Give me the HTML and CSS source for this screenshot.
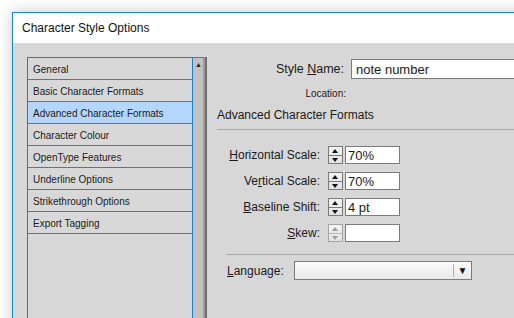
FILE: index.html
```html
<!DOCTYPE html>
<html lang="en">
<head>
    <meta charset="UTF-8">
    <title>Character Style Options</title>
    <link rel="stylesheet" href="styles.css">
</head>
<body>
    <div class="window">
        <div class="titlebar">Character Style Options</div>

        <div class="dialog">
            <div class="sidebar">
                <ul class="category-list">
                    <li>General</li>
                    <li>Basic Character Formats</li>
                    <li class="selected">Advanced Character Formats</li>
                    <li>Character Colour</li>
                    <li>OpenType Features</li>
                    <li>Underline Options</li>
                    <li>Strikethrough Options</li>
                    <li>Export Tagging</li>
                </ul>
                <div class="scrollbar">
                    <span class="scroll-up">&#9650;</span>
                </div>
            </div>

            <div class="panel">
                <div class="name-row">
                    <label class="name-label">Style <u>N</u>ame:</label>
                    <input class="name-input" type="text" value="note number">
                </div>
                <div class="location-row">Location:</div>
                <div class="section-title">Advanced Character Formats</div>

                <div class="fields">
                    <div class="field">
                        <label><u>H</u>orizontal Scale:</label>
                        <span class="spinner"><i class="up"></i><i class="down"></i></span>
                        <input type="text" value="70%">
                    </div>
                    <div class="field">
                        <label>Ve<u>r</u>tical Scale:</label>
                        <span class="spinner"><i class="up"></i><i class="down"></i></span>
                        <input type="text" value="70%">
                    </div>
                    <div class="field">
                        <label><u>B</u>aseline Shift:</label>
                        <span class="spinner"><i class="up"></i><i class="down"></i></span>
                        <input type="text" value="4 pt">
                    </div>
                    <div class="field">
                        <label><u>S</u>kew:</label>
                        <span class="spinner disabled"><i class="up"></i><i class="down"></i></span>
                        <input type="text" value="">
                    </div>
                </div>

                <div class="language-row">
                    <label><u>L</u>anguage:</label>
                    <div class="dropdown">
                        <span class="dropdown-value"></span>
                        <span class="dropdown-arrow">&#9660;</span>
                    </div>
                </div>
            </div>
        </div>
    </div>
</body>
</html>
```

FILE: styles.css
```css
body {
    margin: 0;
    background: #ffffff;
    font-family: "Liberation Sans", Arial, sans-serif;
    color: #1a1a1a;
    overflow: hidden;
    height: 318px;
}

.window {
    margin: 12px 0 0 12px;
    width: 620px;
    height: 400px;
    border: 1px solid #1883d7;
    box-shadow: 0 0 14px rgba(0, 0, 0, 0.22);
    display: flex;
    flex-direction: column;
}

.titlebar {
    height: 30px;
    line-height: 30px;
    padding-left: 9px;
    background: #ffffff;
    font-size: 12px;
    color: #111;
}

.dialog {
    flex: 1;
    display: flex;
    background: #d7d7d7;
    padding: 14px 0 0 14px;
}

/* category list */
.sidebar {
    display: flex;
}

.category-list {
    list-style: none;
    margin: 0;
    padding: 0;
    width: 164px;
    border: 1px solid #1a7fd4;
    border-bottom: none;
    background: #d8d8d8;
}

.category-list li {
    height: 19px;
    line-height: 19px;
    padding: 2px 0 0 5px;
    font-size: 10px;
    color: #1a1a1a;
    border-bottom: 1px solid #707070;
}

.category-list li.selected {
    background: #b5d6fc;
}

.scrollbar {
    width: 9px;
    background: #c2c2c2;
    border-top: 1px solid #707070;
    border-right: 2px solid #9b9b9b;
    box-shadow: 2px 0 0 #6f6f6f;
    padding-left: 1px;
    margin-right: 2px;
}

.scroll-up {
    display: block;
    font-size: 7px;
    line-height: 8px;
    text-align: center;
    margin-top: 3px;
    color: #222;
}

/* right panel */
.panel {
    margin-left: 10px;
    flex: 1;
}

.name-row {
    display: flex;
    align-items: center;
    margin-top: 2px;
}

.name-label {
    width: 127px;
    text-align: right;
    font-size: 12.5px;
}

.name-input {
    margin-left: 7px;
    width: 200px;
    height: 18px;
    border: 1px solid #7a7a7a;
    padding: 0 0 0 4px;
    font-family: "Liberation Sans", Arial, sans-serif;
    font-size: 13px;
    color: #1a1a1a;
}

.location-row {
    margin-top: 8px;
    width: 129px;
    text-align: right;
    font-size: 10px;
    height: 14px;
    line-height: 14px;
}

.section-title {
    margin-top: 6px;
    font-size: 12px;
    height: 16px;
    line-height: 16px;
    padding-bottom: 6px;
    border-bottom: 1px solid #a8a8a8;
}

.fields {
    padding: 16px 0 0 10px;
    display: flex;
    flex-direction: column;
    gap: 8px;
}

.field {
    display: flex;
    align-items: center;
    height: 18px;
}

.field label,
.language-row label {
    font-size: 12px;
}

.field label {
    width: 93px;
    text-align: right;
    margin-right: 8px;
}

.spinner {
    width: 13px;
    height: 16px;
    border: 1px solid #7a7a7a;
    background: linear-gradient(#f2f2f2, #e2e2e2);
    display: flex;
    flex-direction: column;
    margin-right: 2px;
}

.spinner i {
    flex: 1;
    position: relative;
}

.spinner i::after {
    content: "";
    position: absolute;
    left: 3px;
    top: 2px;
    border-left: 3px solid transparent;
    border-right: 3px solid transparent;
}

.spinner .up {
    border-bottom: 1px solid #7a7a7a;
}

.spinner .up::after {
    border-bottom: 4px solid #111;
}

.spinner .down::after {
    top: 2px;
    border-top: 4px solid #111;
}

.spinner.disabled {
    border-color: #a5a5a5;
}

.spinner.disabled .up {
    border-bottom-color: #b5b5b5;
}

.spinner.disabled .up::after {
    border-bottom-color: #9c9c9c;
}

.spinner.disabled .down::after {
    border-top-color: #9c9c9c;
}

.field input {
    width: 51px;
    height: 16px;
    border: 1px solid #7a7a7a;
    padding: 0 0 0 2px;
    font-family: "Liberation Sans", Arial, sans-serif;
    font-size: 13px;
    color: #1a1a1a;
}

.language-row {
    margin: 12px 0 0 9px;
    padding-top: 6px;
    border-top: 1px solid #a8a8a8;
    display: flex;
    align-items: center;
}

.language-row label {
    width: 67px;
    padding-left: 1px;
}

.dropdown {
    width: 176px;
    height: 17px;
    border: 1px solid #7a7a7a;
    background: linear-gradient(#fafafa, #e9e9e9);
    display: flex;
    justify-content: flex-end;
    align-items: center;
}

.dropdown-arrow {
    width: 17px;
    height: 13px;
    line-height: 13px;
    border-left: 1px solid #b0b0b0;
    text-align: center;
    font-size: 10px;
    color: #111;
}
```
